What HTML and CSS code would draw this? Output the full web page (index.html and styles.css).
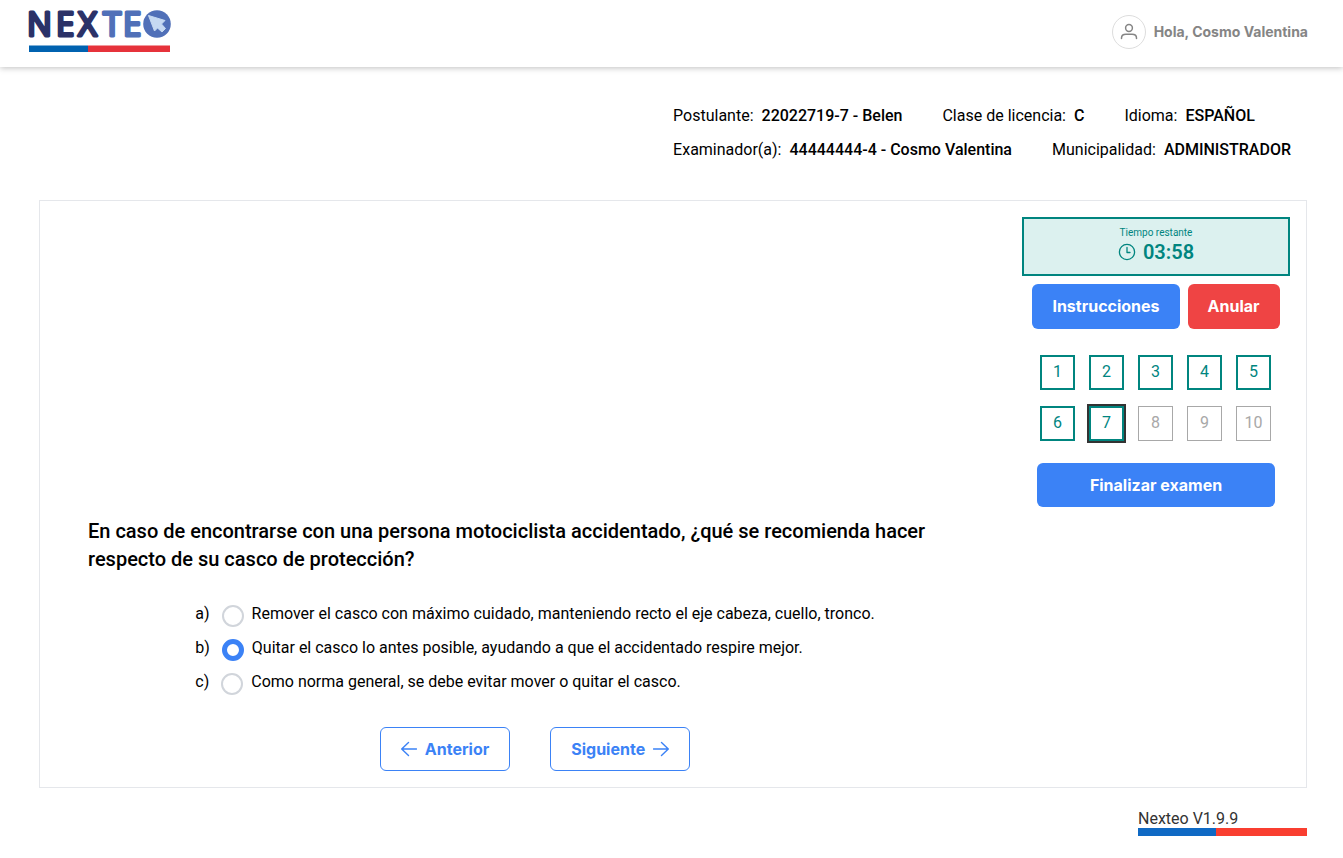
FILE: index.html
```html
<!DOCTYPE html>
<html lang="es">
<head>
<meta charset="utf-8">
<meta name="viewport" content="width=device-width, initial-scale=1">
<title>Nexteo</title>
<link rel="stylesheet" href="styles.css">
</head>
<body>
<header class="topbar">
  <svg class="logo" width="144" height="46" viewBox="0 0 144 46" role="img" aria-label="Nexteo">
    <text class="logo-dark" x="-1 28 50" y="30">NEX</text>
    <text class="logo-light" x="75 95" y="30">TE</text>
    <circle cx="129" cy="18" r="13.8" fill="#5070b8"/>
    <path d="M120.500 9.500L137 14.500L133.500 18L137.500 22.500L134 26L129.500 22L126.500 25Z" fill="#c5d9f2" stroke="#c5d9f2" stroke-width="1" stroke-linejoin="round"/>
    <path d="M1 39.500h59v6.500H1z" fill="#0062b0"/>
    <path d="M60 39.500h82v6.500H60z" fill="#e6323b"/>
  </svg>
  <div class="user">
    <span class="avatar">
      <svg width="18" height="18" viewBox="0 0 18 18" fill="none" stroke="#858585" stroke-width="1.500" stroke-linecap="round"><circle cx="9" cy="5" r="3.400"/><path d="M1.500 15.500v-.5c0-2.300 2-3.700 4.500-3.700h6c2.500 0 4.500 1.400 4.500 3.700v.5"/></svg>
    </span>
    <span>Hola, Cosmo Valentina</span>
  </div>
</header>

<main class="page">
  <div class="info">
    <div class="info-row">
      <span class="field">Postulante: <b>22022719-7 - Belen</b></span>
      <span class="field">Clase de licencia: <b>C</b></span>
      <span class="field">Idioma: <b>ESPAÑOL</b></span>
    </div>
    <div class="info-row">
      <span class="field">Examinador(a): <b>44444444-4 - Cosmo Valentina</b></span>
      <span class="field">Municipalidad: <b>ADMINISTRADOR</b></span>
    </div>
  </div>

  <section class="exam">
    <form class="question">
      <h1 class="question-text" id="q">En caso de encontrarse con una persona motociclista accidentado, ¿qué se recomienda hacer respecto de su casco de protección?</h1>
      <div class="options" role="radiogroup" aria-labelledby="q">
        <label class="option"><span>a)</span><input class="radio" type="radio" name="answer"><span>Remover el casco con máximo cuidado, manteniendo recto el eje cabeza, cuello, tronco.</span></label>
        <label class="option"><span>b)</span><input class="radio" type="radio" name="answer" checked><span>Quitar el casco lo antes posible, ayudando a que el accidentado respire mejor.</span></label>
        <label class="option"><span>c)</span><input class="radio" type="radio" name="answer"><span>Como norma general, se debe evitar mover o quitar el casco.</span></label>
      </div>
      <div class="nav">
        <button class="btn outline" type="button"><svg width="16" height="16" viewBox="0 0 16 16" fill="none" stroke="currentColor" stroke-width="1.400" stroke-linecap="round" stroke-linejoin="round"><path d="M15.500 8H.7M7.500 1.500L.7 8l6.800 6.500"/></svg>Anterior</button>
        <button class="btn outline" type="button">Siguiente<svg width="16" height="16" viewBox="0 0 16 16" fill="none" stroke="currentColor" stroke-width="1.400" stroke-linecap="round" stroke-linejoin="round"><path d="M.5 8h14.800M8.500 1.500L15.300 8l-6.800 6.500"/></svg></button>
      </div>
    </form>

    <aside class="side">
      <div class="timer">
        <span class="timer-label">Tiempo restante</span>
        <span class="timer-value"><svg width="18" height="18" viewBox="0 0 18 18" fill="none" stroke="currentColor" stroke-width="1.300" stroke-linecap="round" stroke-linejoin="round"><circle cx="9" cy="9" r="7.600"/><path d="M9 4.500V9.500h3"/></svg>03:58</span>
      </div>
      <div class="actions">
        <button class="btn primary" type="button">Instrucciones</button>
        <button class="btn danger" type="button">Anular</button>
      </div>
      <div class="numbers">
        <button class="num done" type="button">1</button>
        <button class="num done" type="button">2</button>
        <button class="num done" type="button">3</button>
        <button class="num done" type="button">4</button>
        <button class="num done" type="button">5</button>
        <button class="num done" type="button">6</button>
        <button class="num done current" type="button">7</button>
        <button class="num" type="button">8</button>
        <button class="num" type="button">9</button>
        <button class="num" type="button">10</button>
      </div>
      <button class="btn primary finish" type="button">Finalizar examen</button>
    </aside>
  </section>

  <footer class="footer">
    <div class="version">Nexteo V1.9.9<span class="flag"></span></div>
  </footer>
</main>
</body>
</html>
```
FILE: styles.css
```css
* { box-sizing: border-box; }

body {
  margin: 0;
  background: #fff;
  color: #000;
  font: 16px/24px Roboto, "Liberation Sans", sans-serif;
}

button { font: inherit; cursor: pointer; }

.topbar {
  display: flex;
  justify-content: space-between;
  align-items: flex-start;
  height: 67px;
  padding: 6px 35px 0 28px;
  box-shadow: 0 1px 6px rgba(0, 0, 0, 0.25);
}

.logo { display: block; overflow: visible; }
.logo text {
  font: 400 33px "Open Sans", sans-serif;
  stroke-width: 3px;
  stroke-linejoin: round;
}
.logo-dark { fill: #2b3268; stroke: #2b3268; }
.logo-light { fill: #5070b8; stroke: #5070b8; }

.user {
  display: flex;
  align-items: center;
  gap: 8px;
  padding-top: 9px;
  color: #858585;
  font: 700 14px/20px Inter, sans-serif;
}
.avatar {
  display: flex;
  align-items: center;
  justify-content: center;
  width: 34px;
  height: 34px;
  border: 1px solid #ddd;
  border-radius: 50%;
}

.page { padding: 37px 36px 16px 39px; }

.info {
  display: flex;
  flex-direction: column;
  gap: 10px;
  width: fit-content;
  margin: 0 16px 0 auto;
}
.info-row { display: flex; gap: 40px; }
.field { display: flex; gap: 8px; }
.field b { font-weight: 500; }

.exam {
  display: flex;
  justify-content: space-between;
  min-height: 588px;
  margin-top: 38px;
  padding: 16px;
  border: 1px solid #e5e7eb;
}

.question {
  display: flex;
  flex: 1;
  flex-direction: column;
  justify-content: flex-end;
  padding: 0 40px 0 32px;
}
.question-text {
  margin: 0;
  font-size: 20px;
  line-height: 28px;
  font-weight: 500;
}
.options {
  display: flex;
  flex-direction: column;
  gap: 10px;
  margin: 29px 0 33px;
  padding-left: 12%;
}
.option { display: flex; height: 24px; }
.radio {
  appearance: none;
  flex: none;
  width: 22px;
  height: 22px;
  margin: 3px 8px 0 12px;
  border: 2px solid #d1d5db;
  border-radius: 50%;
  background: #fff;
}
.radio:checked { border: 5px solid #3b82f6; }

.nav { display: flex; justify-content: center; gap: 40px; }

.btn {
  display: flex;
  align-items: center;
  justify-content: center;
  gap: 8px;
  height: 44px;
  padding: 0 20px;
  border: 1px solid transparent;
  border-radius: 6px;
  color: #fff;
  font: 700 16px/20px Inter, sans-serif;
}
.outline { background: #fff; border-color: #3b82f6; color: #3b82f6; }
.primary { background: #3b82f6; }
.danger { background: #ef4444; }

.side {
  display: flex;
  flex-direction: column;
  align-items: center;
  width: 268px;
}
.timer {
  display: flex;
  flex-direction: column;
  align-items: center;
  width: 100%;
  height: 59px;
  padding-top: 7px;
  border: 2px solid #00857f;
  background: #dcf1ef;
  color: #00857f;
}
.timer-label { font-size: 10px; line-height: 14px; }
.timer-value {
  display: flex;
  align-items: center;
  gap: 7px;
  font-size: 20px;
  line-height: 24px;
  font-weight: 600;
}
.actions { display: flex; gap: 8px; margin-top: 8px; }
.actions .btn { height: 45px; padding: 0 19px 1px; }
.numbers {
  display: grid;
  grid-template-columns: repeat(5, 35px);
  gap: 16px 14px;
  width: 232px;
  margin-top: 26px;
}
.num {
  height: 35px;
  padding: 0 0 2px;
  border: 1px solid #a8a8a8;
  background: #fff;
  color: #a8a8a8;
}
.num.done { border: 2px solid #00857f; color: #00857f; }
.num.current { outline: 2px solid #333; }
.finish { width: 238px; margin-top: 22px; }

.footer { display: flex; justify-content: flex-end; margin-top: 19px; }
.version { width: 169px; color: #333; }
.flag {
  display: block;
  height: 8px;
  margin-top: -3px;
  background: linear-gradient(90deg, #0f69c4 46%, #f93e30 46%);
}
```
